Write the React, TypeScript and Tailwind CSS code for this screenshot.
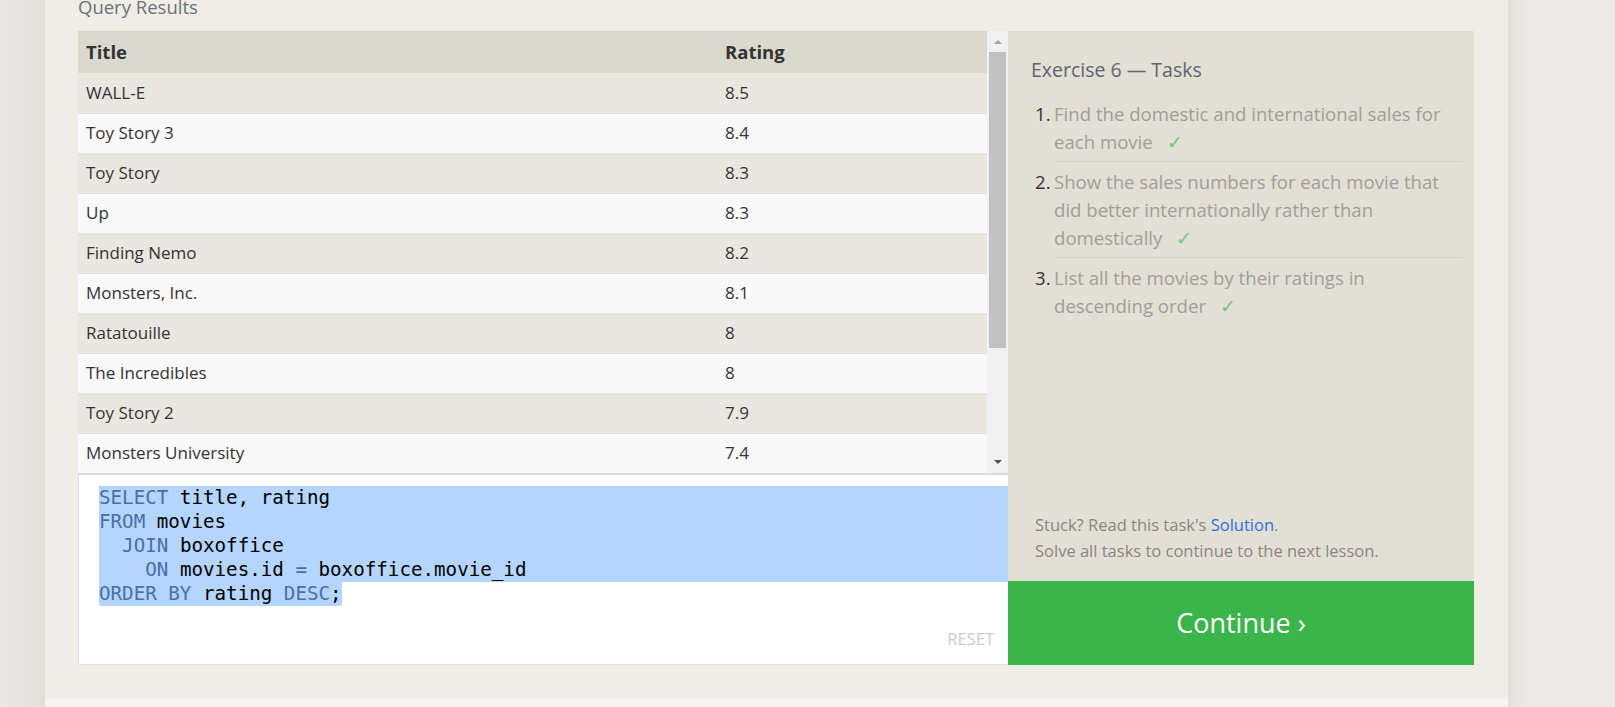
import React from 'react';

const rows: [string, string][] = [
  ['WALL-E', '8.5'],
  ['Toy Story 3', '8.4'],
  ['Toy Story', '8.3'],
  ['Up', '8.3'],
  ['Finding Nemo', '8.2'],
  ['Monsters, Inc.', '8.1'],
  ['Ratatouille', '8'],
  ['The Incredibles', '8'],
  ['Toy Story 2', '7.9'],
  ['Monsters University', '7.4'],
];

const tasks = [
  'Find the domestic and international sales for each movie',
  'Show the sales numbers for each movie that did better internationally rather than domestically',
  'List all the movies by their ratings in descending order',
];

const K: React.FC<{ children: React.ReactNode }> = ({ children }) => (
  <span className="text-[#4b6ea8]">{children}</span>
);

const App: React.FC = () => {
  return (
    <div className="flex h-[707px] w-full overflow-hidden bg-[#ece8e5] font-['Open_Sans',sans-serif]">
      {/* left gutter */}
      <div className="w-[45px] shrink-0 bg-gradient-to-r from-[#ece8e5] to-[#e2deda]" />

      {/* lesson card */}
      <div className="flex w-[1463px] shrink-0 flex-col">
        <div className="flex h-[699px] flex-col bg-[#f0ede6] px-[33px]">
          <div className="relative h-[31px] shrink-0">
            <div className="absolute -top-[4px] left-0 text-[18.5px] leading-[22px] text-[#6a717b]">Query Results</div>
          </div>

          <div className="flex h-[634px]">
            {/* results + editor */}
            <div className="flex w-[930px] flex-col">
              <div className="flex h-[442px]">
                <table className="w-[909px] table-fixed border-collapse text-[#333]">
                  <thead>
                    <tr className="h-[42px] bg-[#dad9cd]">
                      <th className="w-[639px] px-[8px] text-left text-[18.5px] font-bold">Title</th>
                      <th className="px-[8px] text-left text-[18.5px] font-bold">Rating</th>
                    </tr>
                  </thead>
                  <tbody>
                    {rows.map(([title, rating], i) => (
                      <tr
                        key={title}
                        className={`h-[40px] border-b border-[#dedede] text-[17px] ${i % 2 === 0 ? 'bg-[#e9e8e0]' : 'bg-[#f9f9f9]'}`}
                      >
                        <td className="px-[8px]">{title}</td>
                        <td className="px-[8px]">{rating}</td>
                      </tr>
                    ))}
                  </tbody>
                </table>

                {/* scrollbar */}
                <div className="relative w-[21px] bg-[#f1f1f1]">
                  <div className="flex h-[21px] items-center justify-center">
                    <div className="h-0 w-0 border-x-[4px] border-b-[4px] border-x-transparent border-b-[#a3a3a3]" />
                  </div>
                  <div className="ml-[2px] h-[296px] w-[17px] bg-[#c1c1c1]" />
                  <div className="absolute bottom-[6px] left-0 flex h-[10px] w-[21px] items-center justify-center">
                    <div className="h-0 w-0 border-x-[4px] border-t-[4px] border-x-transparent border-t-[#505050]" />
                  </div>
                </div>
              </div>

              <div className="h-[2px] bg-[#dcdbd6]" />

              <div className="relative h-[190px] border-l border-b border-[#e4e2dc] bg-white pl-[20px] pt-[11px]">
                <div className="font-['DejaVu_Sans_Mono',monospace] text-[19.2px] leading-[24px] text-black">
                  <div className="bg-[#b4d5fe] whitespace-pre">
                    <K>SELECT</K> title, rating
                  </div>
                  <div className="bg-[#b4d5fe] whitespace-pre">
                    <K>FROM</K> movies
                  </div>
                  <div className="bg-[#b4d5fe] whitespace-pre">
                    {'  '}
                    <K>JOIN</K> boxoffice
                  </div>
                  <div className="bg-[#b4d5fe] whitespace-pre">
                    {'    '}
                    <K>ON</K> movies.id <K>=</K> boxoffice.movie_id
                  </div>
                  <div className="w-fit rounded-br-[3px] rounded-bl-[3px] bg-[#b4d5fe] whitespace-pre">
                    <K>ORDER BY</K> rating <K>DESC</K>;
                  </div>
                </div>
                <div className="absolute right-[14px] bottom-[12px] text-[16.5px] text-[#cccccc]">RESET</div>
              </div>
            </div>

            {/* tasks */}
            <div className="flex w-[466px] flex-col">
              <div className="flex flex-1 flex-col bg-[#e2dfd4] pl-[23px] pr-[11px] pt-[25px]">
                <div className="text-[19.5px] leading-[28px] text-[#5f6671]">Exercise 6 — Tasks</div>
                <ol className="mt-[16px] text-[18.6px] leading-[28px]">
                  {tasks.map((t, i) => (
                    <li key={i} className="flex">
                      <span className="w-[23px] shrink-0 pl-[4px] text-[#333]">{i + 1}.</span>
                      <div
                        className={`flex-1 pb-[5px] text-[#a19e98] ${i < tasks.length - 1 ? 'mb-[6px] border-b border-[#d5d2c8]' : ''}`}
                      >
                        <div className="max-w-[396px]">
                          {t}
                          <span className="ml-[14px] inline-block text-[#73c77b]">✓</span>
                        </div>
                      </div>
                    </li>
                  ))}
                </ol>
                <div className="mt-auto pb-[17px] pl-[4px] text-[16.5px] leading-[26px] text-[#8b8680]">
                  <div>
                    Stuck? Read this task's <span className="text-[#2f6fde]">Solution</span>.
                  </div>
                  <div>Solve all tasks to continue to the next lesson.</div>
                </div>
              </div>
              <button className="flex h-[84px] items-center justify-center bg-[#3ab54a] text-[27px] text-white">
                Continue ›
              </button>
            </div>
          </div>
        </div>
        <div className="flex-1 bg-[#f5f4f0]" />
      </div>

      {/* right gutter */}
      <div className="flex-1 bg-gradient-to-r from-[#e2deda] to-[#ece8e5] to-[15%]" />
    </div>
  );
};

export default App;
